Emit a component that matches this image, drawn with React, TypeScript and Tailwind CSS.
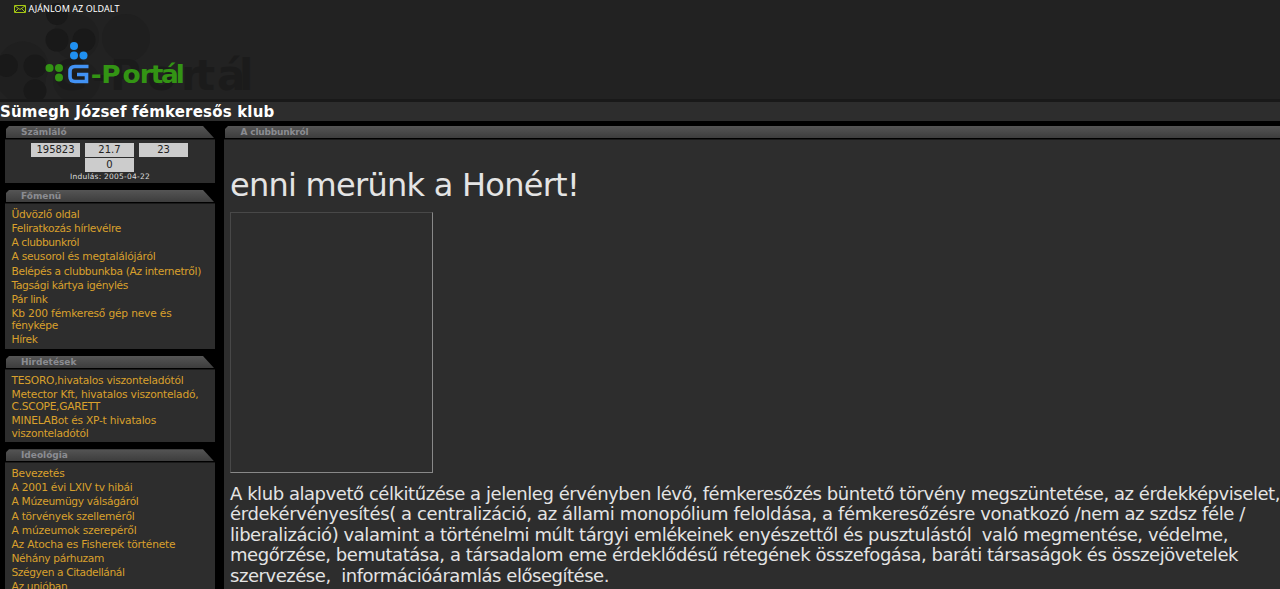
import { useLayoutEffect, useRef, useState } from "react";

type Row = { text: string; width: number };

const mainMenu: Row[][] = [
  [{ text: "Üdvözlő oldal", width: 68 }],
  [{ text: "Feliratkozás hírlevélre", width: 109.5 }],
  [{ text: "A clubbunkról", width: 67.5 }],
  [{ text: "A seusorol és megtalálójáról", width: 144 }],
  [{ text: "Belépés a clubbunkba (Az internetről)", width: 189.5 }],
  [{ text: "Tagsági kártya igénylés", width: 116.5 }],
  [{ text: "Pár link", width: 36 }],
  [
    { text: "Kb 200 fémkereső gép neve és", width: 160 },
    { text: "fényképe", width: 46.5 },
  ],
  [{ text: "Hírek", width: 26 }],
];

const ads: Row[][] = [
  [{ text: "TESORO,hivatalos viszonteladótól", width: 172 }],
  [
    { text: "Metector Kft, hivatalos viszonteladó,", width: 187 },
    { text: "C.SCOPE,GARETT", width: 88.5 },
  ],
  [
    { text: "MINELABot és XP-t hivatalos", width: 144.5 },
    { text: "viszonteladótól", width: 77 },
  ],
];

const ideology: Row[][] = [
  [{ text: "Bevezetés", width: 53 }],
  [{ text: "A 2001 évi LXIV tv hibái", width: 121 }],
  [{ text: "A Múzeumügy válságáról", width: 127 }],
  [{ text: "A törvények szelleméről", width: 123 }],
  [{ text: "A múzeumok szerepéről", width: 125 }],
  [{ text: "Az Atocha es Fisherek története", width: 164 }],
  [{ text: "Néhány párhuzam", width: 92.5 }],
  [{ text: "Szégyen a Citadellánál", width: 113 }],
  [{ text: "Az unióban", width: 56 }],
];

const paragraph: Row[] = [
  {
    text: "A klub alapvető célkitűzése a jelenleg érvényben lévő, fémkeresőzés büntető törvény megszüntetése, az érdekképviselet,",
    width: 1050,
  },
  {
    text: "érdekérvényesítés( a centralizáció, az állami monopólium feloldása, a fémkeresőzésre vonatkozó /nem az szdsz féle /",
    width: 1015,
  },
  {
    text: "liberalizáció) valamint a történelmi múlt tárgyi emlékeinek enyészettől és pusztulástól\u00a0 való megmentése, védelme,",
    width: 998,
  },
  {
    text: "megőrzése, bemutatása, a társadalom eme érdeklődésű rétegének összefogása, baráti társaságok és összejövetelek",
    width: 1008,
  },
  { text: "szervezése,\u00a0 információáramlás elősegítése.", width: 379 },
];

// spreads the letters so that the line is as wide as in Verdana
const Fit = ({ text, width }: Row) => {
  const ref = useRef<HTMLSpanElement>(null);
  const [spacing, setSpacing] = useState(0);

  useLayoutEffect(() => {
    if (!ref.current) return;
    const natural = ref.current.getBoundingClientRect().width;
    setSpacing((width - natural) / text.length);
  }, []);

  return (
    <span ref={ref} className="inline-block whitespace-nowrap" style={{ letterSpacing: spacing }}>
      {text}
    </span>
  );
};

const Logo = () => (
  <svg className="block h-[84px] w-[260px] overflow-visible" viewBox="0 15 260 84">
    <g fill="#1f1f1f">
      <circle cx="126" cy="38" r="24" />
      <path d="M0 56a24 24 0 0 1 46 22a24 24 0 0 1-12 21H8l-8-8z" />
      <path d="M53 79a24 24 0 0 1 47 0a24 24 0 0 1-10 20H63a24 24 0 0 1-10-20z" />
      <circle cx="76" cy="37" r="23" />
    </g>
    <g fill="#191919">
      <circle cx="57" cy="14" r="11" />
      <circle cx="57" cy="40" r="11.5" />
      <circle cx="84" cy="40" r="11.5" />
      <path d="M0 56a11.500 11.500 0 1 1 0 19z" />
      <circle cx="35" cy="66" r="11.5" />
      <path d="M27 99a11.500 11.500 0 1 1 16 0z" />
    </g>
    <text
      x="53 92 110 147 181 195 217 239"
      y="90"
      fill="#1b1b1b"
      fontFamily="DejaVu Sans"
      fontWeight="700"
      fontSize="42"
    >
      G-Portál
    </text>
    <g fill="#2090f0">
      <circle cx="74" cy="46" r="4" />
      <circle cx="74" cy="55.500" r="4" />
      <circle cx="83.500" cy="55.500" r="4" />
    </g>
    <g fill="#339414">
      <circle cx="49.500" cy="68" r="4" />
      <circle cx="59" cy="68" r="4" />
      <circle cx="59" cy="77.500" r="4" />
    </g>
    <path d="M88.500 66.500H75q-5 0-5 5v5q0 5 5 5H86.500V74.500H77" fill="none" stroke="#4292f4" strokeWidth="3.600" />
    {/* the lettering is an extended face, so the glyphs are stretched sideways */}
    <text
      x="82.400 92 111.300 127.100 137 146.400 159.800"
      y="83"
      transform="scale(1.100 1)"
      fill="#339414"
      fontFamily="DejaVu Sans"
      fontWeight="700"
      fontSize="24"
    >
      -Portál
    </text>
  </svg>
);

const TitleBar = ({ title, wide }: { title: string; wide?: boolean }) => (
  <div className="h-[14px] border-b border-[#191919] bg-black">
    <div
      className={
        wide
          ? "ml-px h-3 bg-linear-to-b from-[#555] to-[#3d3d3d] pl-[15.500px] [clip-path:polygon(0_3px,3px_0,100%_0,100%_100%,0_100%)]"
          : "mx-px h-3 bg-linear-to-b from-[#555] to-[#3d3d3d] pl-[15px] [clip-path:polygon(0_3px,3px_0,197px_0,100%_100%,0_100%)]"
      }
    >
      <h2 className="text-[9px] leading-[13px] font-bold text-[#8b8c91]">
        {wide ? <Fit text={title} width={68} /> : title}
      </h2>
    </div>
  </div>
);

const Menu = ({ title, items }: { title: string; items: Row[][] }) => (
  <section className="bg-[#2d2d2d]">
    <TitleBar title={title} />
    <ul className="flex flex-col gap-[2px] pt-[4.800px] pb-[2.400px] pl-[6.500px]">
      {items.map((rows) => (
        <li key={rows[0].text} className="text-[10.670px] leading-[12.200px] text-[#d9a02c]">
          {rows.map((row) => (
            <a key={row.text} href="#" className="block h-[12.200px]">
              <Fit {...row} />
            </a>
          ))}
        </li>
      ))}
    </ul>
  </section>
);

export default function App() {
  return (
    <div className="h-[589px] overflow-hidden bg-black font-['DejaVu_Sans',sans-serif]">
      <header className="h-[99px] bg-[#222]">
        <div className="flex h-[15px] items-center gap-[2.500px] pt-[3px] pl-[14px]">
          <svg className="h-2 w-3" viewBox="0 0 12 8" fill="none" stroke="#a4c614">
            <path d="M.5.5h11v7H.5zM1 1l5 3.500L11 1M1 7l3-3M11 7L8 4" />
          </svg>
          <a href="#" className="z-10 font-['Noto_Sans',sans-serif] text-[9px] leading-3 text-white">
            <Fit text="AJÁNLOM AZ OLDALT" width={91} />
          </a>
        </div>
        <Logo />
      </header>
      <div className="h-[22px] border-t-3 border-[#191919] bg-[#2d2d2d]">
        <h1 className="text-[15px] leading-[20px] font-bold text-white">
          <Fit text="Sümegh József fémkeresős klub" width={274.5} />
        </h1>
      </div>
      <div className="flex gap-[9px] pt-[5px] pl-[5px]">
        <aside className="flex w-[210px] shrink-0 flex-col gap-[7px]">
          <section className="bg-[#2d2d2d]">
            <TitleBar title="Számláló" />
            <div className="h-[43px] pt-[3px] text-center">
              <div className="flex flex-wrap justify-center gap-x-[5px] gap-y-px pr-[21px] pl-5 text-[10px] leading-[14px] text-[#222]">
                {["195823", "21.7", "23", "0"].map((n) => (
                  <span key={n} className="h-[14px] w-[49px] bg-[#ccc]">
                    {n}
                  </span>
                ))}
              </div>
              <p className="text-[7.500px] leading-[9px] text-[#ddd]">
                <Fit text="Indulás: 2005-04-22" width={80} />
              </p>
            </div>
          </section>
          <Menu title="Főmenü" items={mainMenu} />
          <Menu title="Hirdetések" items={ads} />
          <Menu title="Ideológia" items={ideology} />
        </aside>
        <main className="h-[480px] min-w-0 grow bg-[#2d2d2d] text-[#e4e4e4]">
          <TitleBar title="A clubbunkról" wide />
          <div className="pt-[26px] pl-[6px]">
            <p className="text-[32px] leading-[38px]">
              <Fit text="enni merünk a Honért!" width={349} />
            </p>
            <div className="mt-[8px] h-[261px] w-[203px] border border-t-[#484848] border-r-[#888] border-b-[#888] border-l-[#484848]" />
            <div className="mt-[11px] text-[18px] leading-[20.400px]">
              {paragraph.map((row) => (
                <p key={row.text} className="h-[20.400px]">
                  <Fit {...row} />
                </p>
              ))}
            </div>
          </div>
        </main>
      </div>
    </div>
  );
}
